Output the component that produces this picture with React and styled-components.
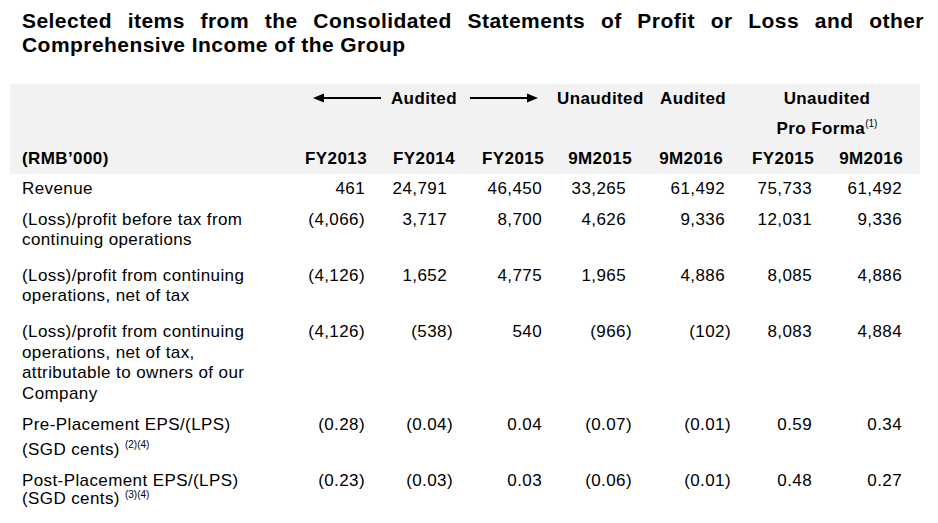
import * as React from "react";
import styled, { createGlobalStyle } from "styled-components";

const GlobalStyle = createGlobalStyle`
  body {
    margin: 0;
    background: #ffffff;
    color: #000000;
    font-family: "Liberation Sans", Arial, sans-serif;
  }
`;

const COLS = "257px 88px 88px 89px 88px 91px 91px 89px";
// where the figures end inside each column (offset from the column's right edge)
const NUM_OFFSET = [2, 8, 2, 6, -2, 2, 1];
// columns where a closing bracket hangs past the figures
const HANG = [false, true, false, true, true, false, false];

const Page = styled.div`
  box-sizing: border-box;
  width: 938px;
  padding-top: 9px;
`;

const Title = styled.h1`
  margin: 0 14px 0 22px;
  font-size: 21px;
  line-height: 24px;
  font-weight: bold;
  letter-spacing: 0.45px;
  text-align: justify;
`;

const Table = styled.div`
  width: 910px;
  margin: 27px 0 0 10px;
  font-size: 17px;
  letter-spacing: 0.4px;
`;

const HeaderBand = styled.div`
  background: #f2f2f2;
  padding: 0 17px 0 12px;
  font-weight: bold;
`;

const HeaderRow = styled.div`
  display: grid;
  grid-template-columns: ${COLS};
  height: 30px;
  align-items: center;
  white-space: nowrap;
`;

const HeadCell = styled.div`
  text-align: ${(p) => p.$align || "right"};
  grid-column: ${(p) => p.$col || "auto"};
  padding-left: ${(p) => p.$shift || 0}px;
`;

const ArrowGroup = styled.div`
  grid-column: 2 / span 3;
  display: flex;
  align-items: center;
  justify-content: flex-end;
  padding-right: 6px;

  & > span {
    margin: 0 13px 0 10px;
  }

  & svg {
    display: block;
    position: relative;
    top: -1px;
  }
`;

const Sup = styled.span`
  font-size: 10px;
  font-weight: normal;
  letter-spacing: 0;
  line-height: 0;
  position: relative;
  top: ${(p) => p.$raise || -10}px;
  margin-left: ${(p) => p.$space || 0}px;
`;

const Body = styled.div`
  padding: 0 17px 0 12px;
`;

const DataRow = styled.div`
  display: grid;
  grid-template-columns: ${COLS};
  margin-top: ${(p) => p.$top}px;
  line-height: 20.5px;
  white-space: nowrap;
`;

const Label = styled.div`
  display: flex;
  flex-direction: column;
`;

const LabelLine = styled.div`
  margin-top: ${(p) => p.$gap - 20.5}px;
  &:first-child {
    margin-top: 0;
  }
`;

const Num = styled.div`
  text-align: right;
  margin-right: ${(p) => p.$offset}px;
`;

function Arrow({ dir }) {
  return (
    <svg width="68" height="10" viewBox="0 0 68 10">
      {dir === "left" ? (
        <>
          <polygon points="0,5 11,0.5 11,9.5" fill="#000" />
          <line x1="10" y1="5" x2="68" y2="5" stroke="#000" strokeWidth="2" />
        </>
      ) : (
        <>
          <line x1="0" y1="5" x2="58" y2="5" stroke="#000" strokeWidth="2" />
          <polygon points="68,5 57,0.5 57,9.5" fill="#000" />
        </>
      )}
    </svg>
  );
}

const ROWS = [
  {
    top: 5,
    label: ["Revenue"],
    values: ["461", "24,791", "46,450", "33,265", "61,492", "75,733", "61,492"],
  },
  {
    top: 10,
    label: ["(Loss)/profit before tax from", "continuing operations"],
    values: ["(4,066)", "3,717", "8,700", "4,626", "9,336", "12,031", "9,336"],
  },
  {
    top: 15,
    label: ["(Loss)/profit from continuing", "operations, net of tax"],
    values: ["(4,126)", "1,652", "4,775", "1,965", "4,886", "8,085", "4,886"],
  },
  {
    top: 15.5,
    label: [
      "(Loss)/profit from continuing",
      "operations, net of tax,",
      "attributable to owners of our",
      "Company",
    ],
    values: ["(4,126)", "(538)", "540", "(966)", "(102)", "8,083", "4,884"],
  },
  {
    top: 11,
    label: ["Pre-Placement EPS/(LPS)", "(SGD cents)"],
    sup: "(2)(4)",
    gap: 25,
    raise: -7,
    values: ["(0.28)", "(0.04)", "0.04", "(0.07)", "(0.01)", "0.59", "0.34"],
  },
  {
    top: 10,
    label: ["Post-Placement EPS/(LPS)", "(SGD cents)"],
    sup: "(3)(4)",
    gap: 18,
    raise: -6,
    values: ["(0.23)", "(0.03)", "0.03", "(0.06)", "(0.01)", "0.48", "0.27"],
  },
];

const PERIODS = ["FY2013", "FY2014", "FY2015", "9M2015", "9M2016", "FY2015", "9M2016"];

export default function App() {
  return (
    <Page>
      <GlobalStyle />
      <Title>
        Selected items from the Consolidated Statements of Profit or Loss and other
        Comprehensive Income of the Group
      </Title>
      <Table>
        <HeaderBand>
          <HeaderRow>
            <ArrowGroup>
              <Arrow dir="left" />
              <span>Audited</span>
              <Arrow dir="right" />
            </ArrowGroup>
            <HeadCell $col="5" $align="left" $shift={13}>
              Unaudited
            </HeadCell>
            <HeadCell $col="6" $align="left" $shift={28}>
              Audited
            </HeadCell>
            <HeadCell $col="7 / span 2" $align="center" $shift={28}>
              Unaudited
            </HeadCell>
          </HeaderRow>
          <HeaderRow>
            <HeadCell $col="7 / span 2" $align="center" $shift={28}>
              Pro Forma<Sup $raise={-7}>(1)</Sup>
            </HeadCell>
          </HeaderRow>
          <HeaderRow>
            <HeadCell $align="left">(RMB’000)</HeadCell>
            {PERIODS.map((p, i) => (
              <HeadCell key={i}>{p}</HeadCell>
            ))}
          </HeaderRow>
        </HeaderBand>
        <Body>
          {ROWS.map((row, r) => (
            <DataRow key={r} $top={row.top}>
              <Label>
                {row.label.map((line, l) => (
                  <LabelLine key={l} $gap={row.gap || 20.5}>
                    {line}
                    {row.sup && l === row.label.length - 1 && (
                      <Sup $space={5} $raise={row.raise}>
                        {row.sup}
                      </Sup>
                    )}
                  </LabelLine>
                ))}
              </Label>
              {row.values.map((v, i) => (
                <Num
                  key={i}
                  $offset={NUM_OFFSET[i] - (HANG[i] && v.endsWith(")") ? 6 : 0)}
                >
                  {v}
                </Num>
              ))}
            </DataRow>
          ))}
        </Body>
      </Table>
    </Page>
  );
}
